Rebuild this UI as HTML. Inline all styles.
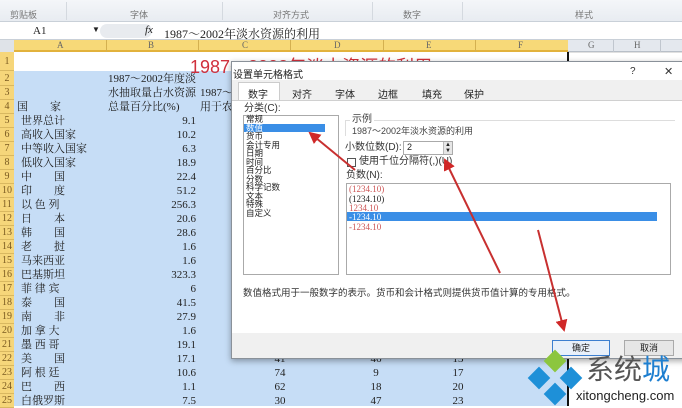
<!DOCTYPE html>
<html><head><meta charset="utf-8"><style>
*{margin:0;padding:0;box-sizing:border-box}
body{width:682px;height:406px;overflow:hidden;position:relative;background:#fff;font-family:"Liberation Serif","Noto Serif CJK SC",serif;font-size:11px;color:#222}
.a{position:absolute;white-space:nowrap}
.s{font-family:"Liberation Sans","Noto Sans CJK SC",sans-serif}
.rh{position:absolute;left:0;width:14px;background:#f6d67a;color:#7a5a20;font-size:10px;text-align:center;border-bottom:1px solid #d9b860}
.c{position:absolute;font-size:11px;line-height:14px}
.it{position:absolute;left:246px;font-size:8.5px;line-height:9px;height:9px;font-family:"Liberation Sans","Noto Sans CJK SC",sans-serif}
.ng{position:absolute;left:349px;font-size:9px;line-height:10px;height:10px;color:#c55}
</style></head><body>
<div class="a" style="left:0;top:0;width:682px;height:22px;background:linear-gradient(#f4f6f9,#e8ecf1);border-bottom:1px solid #c9d0d8"></div>
<div class="a s" style="left:10px;top:8px;font-size:9px;color:#777">剪贴板</div>
<div class="a s" style="left:130px;top:8px;font-size:9px;color:#777">字体</div>
<div class="a s" style="left:273px;top:8px;font-size:9px;color:#777">对齐方式</div>
<div class="a s" style="left:403px;top:8px;font-size:9px;color:#777">数字</div>
<div class="a s" style="left:575px;top:8px;font-size:9px;color:#777">样式</div>
<div class="a" style="left:66px;top:2px;width:1px;height:18px;background:#d4d9df"></div>
<div class="a" style="left:222px;top:2px;width:1px;height:18px;background:#d4d9df"></div>
<div class="a" style="left:372px;top:2px;width:1px;height:18px;background:#d4d9df"></div>
<div class="a" style="left:462px;top:2px;width:1px;height:18px;background:#d4d9df"></div>
<div class="a" style="left:0;top:23px;width:682px;height:17px;background:#fff;border-bottom:1px solid #c9d0d8"></div>
<div class="a" style="left:33px;top:25px;font-size:11px">A1</div>
<div class="a" style="left:92px;top:25px;font-size:8px">▼</div>
<div class="a" style="left:100px;top:24px;width:52px;height:14px;background:#e8ebef;border-radius:7px"></div>
<div class="a" style="left:145px;top:24px;font-size:11px;font-style:italic">fx</div>
<div class="a" style="left:164px;top:25px;font-size:12px">1987～2002年淡水资源的利用</div>
<div class="a" style="left:0;top:40px;width:682px;height:12px;background:#e4e8ee;border-bottom:1px solid #b8bfc8"></div>
<div class="a" style="left:14px;top:40px;width:554px;height:12px;background:#f7d978;border-bottom:2px solid #e2b23c"></div>
<div class="a" style="left:0;top:40px;width:14px;height:12px;background:#dfe3e8"></div>
<div class="a" style="left:57px;top:40px;font-size:9px;color:#666">A</div>
<div class="a" style="left:148px;top:40px;font-size:9px;color:#666">B</div>
<div class="a" style="left:242px;top:40px;font-size:9px;color:#666">C</div>
<div class="a" style="left:334px;top:40px;font-size:9px;color:#666">D</div>
<div class="a" style="left:426px;top:40px;font-size:9px;color:#666">E</div>
<div class="a" style="left:518px;top:40px;font-size:9px;color:#666">F</div>
<div class="a" style="left:588px;top:40px;font-size:9px;color:#666">G</div>
<div class="a" style="left:634px;top:40px;font-size:9px;color:#666">H</div>
<div class="a" style="left:106px;top:40px;width:1px;height:12px;background:#d4b050"></div>
<div class="a" style="left:198px;top:40px;width:1px;height:12px;background:#d4b050"></div>
<div class="a" style="left:290px;top:40px;width:1px;height:12px;background:#d4b050"></div>
<div class="a" style="left:383px;top:40px;width:1px;height:12px;background:#d4b050"></div>
<div class="a" style="left:475px;top:40px;width:1px;height:12px;background:#d4b050"></div>
<div class="a" style="left:613px;top:40px;width:1px;height:12px;background:#c0c6ce"></div>
<div class="a" style="left:660px;top:40px;width:1px;height:12px;background:#c0c6ce"></div>
<div class="a" style="left:14px;top:71px;width:554px;height:335px;background:#c6ddf6"></div>
<div class="a" style="left:567px;top:52px;width:2px;height:354px;background:#111"></div>
<div class="a" style="left:569px;top:52px;width:113px;height:1px;background:#e0e0e0"></div>
<div class="rh" style="top:52px;height:19px;line-height:19px">1</div>
<div class="rh" style="top:71px;height:15px;line-height:15px">2</div>
<div class="rh" style="top:86px;height:14px;line-height:14px">3</div>
<div class="rh" style="top:100px;height:14px;line-height:14px">4</div>
<div class="rh" style="top:114px;height:14px;line-height:14px">5</div>
<div class="rh" style="top:128px;height:14px;line-height:14px">6</div>
<div class="rh" style="top:142px;height:14px;line-height:14px">7</div>
<div class="rh" style="top:156px;height:14px;line-height:14px">8</div>
<div class="rh" style="top:170px;height:14px;line-height:14px">9</div>
<div class="rh" style="top:184px;height:14px;line-height:14px">10</div>
<div class="rh" style="top:198px;height:14px;line-height:14px">11</div>
<div class="rh" style="top:212px;height:14px;line-height:14px">12</div>
<div class="rh" style="top:226px;height:14px;line-height:14px">13</div>
<div class="rh" style="top:240px;height:14px;line-height:14px">14</div>
<div class="rh" style="top:254px;height:14px;line-height:14px">15</div>
<div class="rh" style="top:268px;height:14px;line-height:14px">16</div>
<div class="rh" style="top:282px;height:14px;line-height:14px">17</div>
<div class="rh" style="top:296px;height:14px;line-height:14px">18</div>
<div class="rh" style="top:310px;height:14px;line-height:14px">19</div>
<div class="rh" style="top:324px;height:14px;line-height:14px">20</div>
<div class="rh" style="top:338px;height:14px;line-height:14px">21</div>
<div class="rh" style="top:352px;height:14px;line-height:14px">22</div>
<div class="rh" style="top:366px;height:14px;line-height:14px">23</div>
<div class="rh" style="top:380px;height:14px;line-height:14px">24</div>
<div class="rh" style="top:394px;height:14px;line-height:14px">25</div>
<div class="a" style="left:190px;top:53px;font-size:18px;color:#d0303c;font-family:'Liberation Sans','Noto Sans CJK SC',sans-serif">1987～2002年淡水资源的利用</div>
<div class="c" style="left:108px;top:72px">1987～2002年度淡<br>水抽取量占水资源<br>总量百分比(%)</div>
<div class="c" style="left:200px;top:86px">1987～<br>用于农</div>
<div class="c" style="left:17px;top:100px">国　　家</div>
<div class="c" style="left:21px;top:114px;line-height:14px">世界总计<br>高收入国家<br>中等收入国家<br>低收入国家<br>中　　国<br>印　　度<br>以 色 列<br>日　　本<br>韩　　国<br>老　　挝<br>马来西亚<br>巴基斯坦<br>菲 律 宾<br>泰　　国<br>南　　非<br>加 拿 大<br>墨 西 哥<br>美　　国<br>阿 根 廷<br>巴　　西<br>白俄罗斯</div>
<div class="c" style="left:120px;width:76px;top:114px;text-align:right">9.1<br>10.2<br>6.3<br>18.9<br>22.4<br>51.2<br>256.3<br>20.6<br>28.6<br>1.6<br>1.6<br>323.3<br>6<br>41.5<br>27.9<br>1.6<br>19.1<br>17.1<br>10.6<br>1.1<br>7.5</div>
<div class="c" style="left:270px;width:20px;top:352px;text-align:center">41<br>74<br>62<br>30</div>
<div class="c" style="left:366px;width:20px;top:352px;text-align:center">46<br>9<br>18<br>47</div>
<div class="c" style="left:448px;width:20px;top:352px;text-align:center">13<br>17<br>20<br>23</div>
<div class="a" style="left:231px;top:61px;width:460px;height:298px;background:#fff;border:1px solid #8a9199;box-shadow:0 2px 6px rgba(0,0,0,.35)"></div>
<div class="a s" style="left:233px;top:66px;font-size:10px">设置单元格格式</div>
<div class="a s" style="left:630px;top:66px;font-size:10px;color:#333">?</div>
<div class="a s" style="left:664px;top:65px;font-size:11px;color:#333">✕</div>
<div class="a" style="left:232px;top:80px;width:450px;height:20px;background:#f0f0f0"></div>
<div class="a" style="left:238px;top:82px;width:42px;height:19px;background:#fff;border:1px solid #ccc;border-bottom:none"></div>
<div class="a s" style="left:248px;top:86px;font-size:10px">数字</div>
<div class="a s" style="left:292px;top:86px;font-size:10px">对齐</div>
<div class="a s" style="left:335px;top:86px;font-size:10px">字体</div>
<div class="a s" style="left:378px;top:86px;font-size:10px">边框</div>
<div class="a s" style="left:422px;top:86px;font-size:10px">填充</div>
<div class="a s" style="left:464px;top:86px;font-size:10px">保护</div>
<div class="a" style="left:232px;top:100px;width:450px;height:1px;background:#d0d0d0"></div>
<div class="a s" style="left:244px;top:103px;font-size:10px;line-height:12px;color:#333">分类(C):</div>
<div class="a" style="left:243px;top:115px;width:96px;height:160px;border:1px solid #aaa;background:#fff"></div>
<div class="a" style="left:244px;top:124px;width:81px;height:8px;background:#3a8ee6"></div>
<div class="it" style="top:115px">常规</div>
<div class="it" style="top:123.5px;color:#fff">数值</div>
<div class="it" style="top:132px">货币</div>
<div class="it" style="top:140.5px">会计专用</div>
<div class="it" style="top:149px">日期</div>
<div class="it" style="top:157.5px">时间</div>
<div class="it" style="top:166px">百分比</div>
<div class="it" style="top:174.5px">分数</div>
<div class="it" style="top:183px">科学记数</div>
<div class="it" style="top:191.5px">文本</div>
<div class="it" style="top:200px">特殊</div>
<div class="it" style="top:208.5px">自定义</div>
<div class="a" style="left:345px;top:120px;width:330px;height:16px;border-top:1px solid #ddd;border-left:1px solid #ddd"></div>
<div class="a s" style="left:350px;top:114px;font-size:10px;line-height:12px;color:#444;background:#fff;padding:0 2px">示例</div>
<div class="a s" style="left:352px;top:126px;font-size:9px;line-height:11px;color:#444">1987～2002年淡水资源的利用</div>
<div class="a s" style="left:345px;top:142px;font-size:10px;line-height:12px;color:#333">小数位数(D):</div>
<div class="a" style="left:403px;top:141px;width:50px;height:14px;border:1px solid #aaa;background:#fff"></div>
<div class="a s" style="left:407px;top:142px;font-size:9px">2</div>
<div class="a" style="left:443px;top:142px;width:9px;height:12px;background:#e6e6e6;border-left:1px solid #bbb;font-size:6px;line-height:6px;text-align:center">▲<br>▼</div>
<div class="a" style="left:347px;top:158px;width:9px;height:9px;border:1px solid #555;background:#fff"></div>
<div class="a s" style="left:359px;top:156px;font-size:10px;line-height:12px;color:#333">使用千位分隔符(,)(U)</div>
<div class="a s" style="left:346px;top:170px;font-size:10px;line-height:12px;color:#333">负数(N):</div>
<div class="a" style="left:346px;top:183px;width:325px;height:92px;border:1px solid #aaa;background:#fff"></div>
<div class="a" style="left:347px;top:212px;width:310px;height:9px;background:#3a8ee6"></div>
<div class="ng" style="top:184px">(1234.10)</div>
<div class="ng" style="top:194px;color:#222">(1234.10)</div>
<div class="ng" style="top:203px">1234.10</div>
<div class="ng" style="top:212px;color:#fff">-1234.10</div>
<div class="ng" style="top:222px">-1234.10</div>
<div class="a s" style="left:243px;top:285px;font-size:9.5px;color:#333">数值格式用于一般数字的表示。货币和会计格式则提供货币值计算的专用格式。</div>
<div class="a" style="left:232px;top:333px;width:450px;height:25px;background:#f0f0f0"></div>
<div class="a s" style="left:552px;top:340px;width:58px;height:16px;border:1px solid #3c7fd0;background:#e8f0fa;font-size:9px;text-align:center;line-height:14px">确定</div>
<div class="a s" style="left:624px;top:340px;width:50px;height:16px;border:1px solid #aaa;background:#e6e6e6;font-size:9px;text-align:center;line-height:14px">取消</div>
<svg class="a" style="left:0;top:0" width="682" height="406">
<defs><marker id="m" markerWidth="6" markerHeight="6" refX="5" refY="3" orient="auto"><path d="M0,0 L6,3 L0,6z" fill="#d02828"/></marker></defs>
<line x1="355" y1="170" x2="310" y2="133" stroke="#c83030" stroke-width="2" marker-end="url(#m)"/>
<line x1="500" y1="273" x2="445" y2="160" stroke="#c83030" stroke-width="2" marker-end="url(#m)"/>
<line x1="538" y1="230" x2="564" y2="330" stroke="#c83030" stroke-width="2" marker-end="url(#m)"/>
<rect x="-8" y="-8" width="16" height="16" fill="#8cc63f" transform="translate(555,361) rotate(45)"/>
<rect x="-8" y="-8" width="16" height="16" fill="#1e90d8" transform="translate(539,378) rotate(45)"/>
<rect x="-8" y="-8" width="16" height="16" fill="#1e90d8" transform="translate(571,378) rotate(45)"/>
<rect x="-8" y="-8" width="16" height="16" fill="#1e90d8" transform="translate(555,394) rotate(45)"/>
</svg>
<div class="a s" style="left:586px;top:354px;font-size:28px;line-height:32px;color:#555">系统<span style="color:#1e7fd0">城</span></div>
<div class="a s" style="left:576px;top:388px;font-size:13px;line-height:16px;color:#222">xitongcheng.com</div>
</body></html>
